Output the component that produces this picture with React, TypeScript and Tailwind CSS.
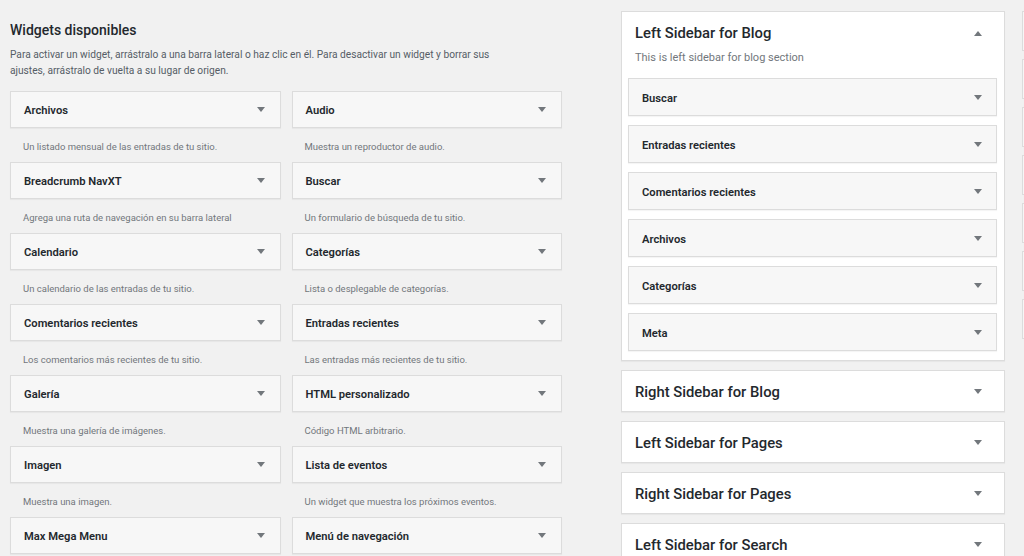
import { ReactNode } from "react";

const available = [
  ["Archivos", "Un listado mensual de las entradas de tu sitio."],
  ["Audio", "Muestra un reproductor de audio."],
  ["Breadcrumb NavXT", "Agrega una ruta de navegación en su barra lateral"],
  ["Buscar", "Un formulario de búsqueda de tu sitio."],
  ["Calendario", "Un calendario de las entradas de tu sitio."],
  ["Categorías", "Lista o desplegable de categorías."],
  ["Comentarios recientes", "Los comentarios más recientes de tu sitio."],
  ["Entradas recientes", "Las entradas más recientes de tu sitio."],
  ["Galería", "Muestra una galería de imágenes."],
  ["HTML personalizado", "Código HTML arbitrario."],
  ["Imagen", "Muestra una imagen."],
  ["Lista de eventos", "Un widget que muestra los próximos eventos."],
  ["Max Mega Menu", ""],
  ["Menú de navegación", ""],
];

const blogWidgets = [
  "Buscar",
  "Entradas recientes",
  "Comentarios recientes",
  "Archivos",
  "Categorías",
  "Meta",
];

const sidebars = [
  "Right Sidebar for Blog",
  "Left Sidebar for Pages",
  "Right Sidebar for Pages",
  "Left Sidebar for Search",
];

const Arrow = ({ up = false }: { up?: boolean }) => (
  <svg width="8" height="5" viewBox="0 0 8 5" className="shrink-0">
    {up ? (
      <path d="M0 5 L4 0 L8 5 Z" fill="#72777c" />
    ) : (
      <path d="M0 0 L8 0 L4 5 Z" fill="#72777c" />
    )}
  </svg>
);

const WidgetBox = ({ children, className = "" }: { children: ReactNode; className?: string }) => (
  <div
    className={`flex items-center justify-between border border-[#dcdcdc] bg-[#f7f7f7] shadow-[0_1px_1px_rgba(0,0,0,0.04)] ${className}`}
  >
    {children}
  </div>
);

export default function App() {
  return (
    <div
      className="w-[1024px] h-[556px] overflow-hidden bg-[#f1f1f1] text-[#23282d] flex"
      style={{ fontFamily: '"Segoe UI", Roboto, "Noto Sans", sans-serif' }}
    >
      {/* Available widgets */}
      <div className="w-[552px] ml-[10px] shrink-0 pt-[18px]">
        <h2 className="text-[14px] leading-[24px] font-medium text-[#23282d]">Widgets disponibles</h2>
        <p className="mt-[5px] w-[492px] text-[10.2px] leading-[16px] text-[#555d66]">
          Para activar un widget, arrástralo a una barra lateral o haz clic en él. Para desactivar un widget y borrar sus
          ajustes, arrástralo de vuelta a su lugar de origen.
        </p>
        <div className="mt-[12px] grid grid-cols-2 gap-x-[11px]">
          {available.map(([title, desc]) => (
            <div key={title} className="flex flex-col">
              <WidgetBox className="h-[37px] pl-[13px] pr-[15px]">
                <span className="text-[11.2px] font-semibold pt-[3px]">{title}</span>
                <Arrow />
              </WidgetBox>
              <div className="h-[34px] pt-[11px] pl-[13px] text-[9.5px] leading-[16px] text-[#72777c]">{desc}</div>
            </div>
          ))}
        </div>
      </div>

      {/* Sidebars */}
      <div className="w-[384px] ml-[59px] shrink-0 pt-[11px] flex flex-col gap-[9px]">
        <div className="border border-[#dcdcdc] bg-white shadow-[0_1px_1px_rgba(0,0,0,0.04)] pt-[10px] pb-[9px] pl-[6px] pr-[7px]">
          <div className="flex items-center justify-between pl-[7px] pr-[15px]">
            <h3 className="text-[14.8px] leading-[22px] font-medium">Left Sidebar for Blog</h3>
            <Arrow up />
          </div>
          <p className="pl-[7px] mt-[6px] text-[11px] leading-[16px] text-[#72777c]">
            This is left sidebar for blog section
          </p>
          <div className="mt-[12px] flex flex-col gap-[9px]">
            {blogWidgets.map((w) => (
              <WidgetBox key={w} className="h-[38px] pl-[13px] pr-[14px]">
                <span className="text-[11.2px] font-semibold pt-[4px]">{w}</span>
                <Arrow />
              </WidgetBox>
            ))}
          </div>
        </div>
        {sidebars.map((s) => (
          <div
            key={s}
            className="h-[42px] shrink-0 flex items-center justify-between border border-[#dcdcdc] bg-white shadow-[0_1px_1px_rgba(0,0,0,0.04)] pl-[13px] pr-[22px]"
          >
            <h3 className="text-[14.8px] leading-[22px] font-medium pt-[2px]">{s}</h3>
            <Arrow />
          </div>
        ))}
      </div>

      {/* Next column, cut off */}
      <div className="w-[200px] ml-[17px] shrink-0 pt-[11px] flex flex-col gap-[8px]">
        {[0, 1, 2, 3, 4, 5, 6].map((i) => (
          <div key={i} className="h-[40px] border border-[#dcdcdc] bg-[#f6f6f6]" />
        ))}
      </div>
    </div>
  );
}
